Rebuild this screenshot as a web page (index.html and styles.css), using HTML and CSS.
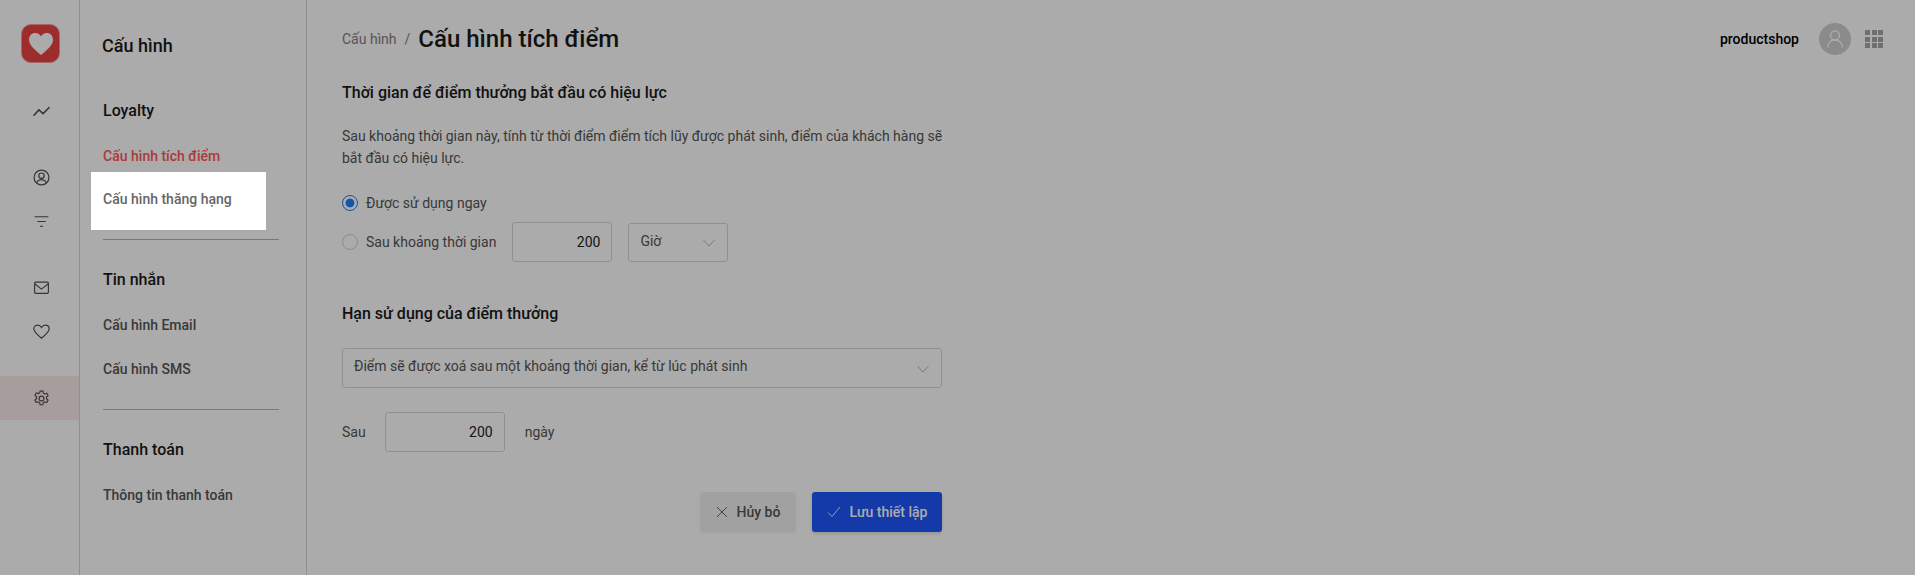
FILE: index.html
```html
<!DOCTYPE html>
<html lang="vi">
<head>
<meta charset="utf-8">
<title>Cấu hình tích điểm</title>
<link rel="stylesheet" href="styles.css">
</head>
<body>
<div class="app">
  <nav class="rail">
    <div class="logo">
      <svg width="26" height="24" viewBox="0 0 26 24"><path d="M13 23C5 16.500 1 12.500 1 7.500 1 3.700 3.800 1 7.200 1 9.600 1 11.800 2.200 13 4.300 14.200 2.200 16.400 1 18.800 1 22.200 1 25 3.700 25 7.500 25 12.500 21 16.500 13 23Z" fill="#fff"/></svg>
    </div>
    <div class="rail-group first">
      <div class="rail-icon"><svg class="ic bold" viewBox="0 0 16 16"><path d="M.5 12 5.500 6.500l4 3.500 6-6"/></svg></div>
    </div>
    <div class="rail-group">
      <div class="rail-icon"><svg class="ic" viewBox="0 0 16 16"><circle cx="8" cy="8" r="7"/><circle cx="8" cy="6.300" r="2.500"/><path d="M3.500 13c.8-2 2.500-3 4.500-3s3.700 1 4.500 3"/></svg></div>
      <div class="rail-icon"><svg class="ic" viewBox="0 0 16 16"><path d="M1.500 3.500h13M4 8h8M6.500 12.500h3"/></svg></div>
    </div>
    <div class="rail-group">
      <div class="rail-icon"><svg class="ic" viewBox="0 0 16 16"><rect x="1.500" y="3" width="13" height="10.500" rx="1"/><path d="M1.500 4.500 8 9.500l6.500-5"/></svg></div>
      <div class="rail-icon"><svg class="ic" viewBox="0 0 16 16"><path d="M8 14.300C3.200 10.500.8 8.300.8 5.500.8 3.400 2.400 2 4.300 2 5.800 2 7.200 2.800 8 4.200 8.800 2.800 10.200 2 11.700 2c1.900 0 3.500 1.400 3.500 3.500 0 2.800-2.400 5-7.200 8.800Z"/></svg></div>
    </div>
    <div class="rail-group last">
      <div class="rail-icon active"><svg class="ic" viewBox="0 0 16 16"><path d="M6.700 1h2.600l.4 2 1.300.7 1.900-.7 1.300 2.300-1.500 1.300v1.600l1.500 1.300-1.300 2.300-1.900-.7-1.300.8-.4 2H6.700l-.4-2-1.300-.8-1.900.7-1.300-2.300 1.500-1.300V6.300L1.800 5l1.300-2.300 1.900.7 1.300-.7Z"/><circle cx="8" cy="8" r="2.300"/></svg></div>
    </div>
  </nav>

  <aside class="side">
    <h1 class="side-title">Cấu hình</h1>
    <section class="side-sec">
      <h2 class="side-head">Loyalty</h2>
      <a class="side-link current">Cấu hình tích điểm</a>
      <a class="side-link spot">Cấu hình thăng hạng</a>
    </section>
    <section class="side-sec ruled">
      <h2 class="side-head">Tin nhắn</h2>
      <a class="side-link">Cấu hình Email</a>
      <a class="side-link">Cấu hình SMS</a>
    </section>
    <section class="side-sec ruled">
      <h2 class="side-head">Thanh toán</h2>
      <a class="side-link">Thông tin thanh toán</a>
    </section>
  </aside>

  <main class="main">
    <header class="top">
      <div class="crumbs">
        <span class="crumb">Cấu hình</span>
        <span class="slash">/</span>
        <span class="page-title">Cấu hình tích điểm</span>
      </div>
      <div class="user">
        <span class="shop">productshop</span>
        <span class="avatar"><svg width="20" height="20" viewBox="0 0 20 20" fill="none" stroke="#fff" stroke-width="1.300"><circle cx="10" cy="6.500" r="4.500"/><path d="M2.500 18.500c.5-4.500 3.500-7.500 7.500-7.500s7 3 7.500 7.500"/></svg></span>
        <span class="apps"><i></i><i></i><i></i><i></i><i></i><i></i><i></i><i></i><i></i></span>
      </div>
    </header>

    <div class="form">
      <h3 class="form-head">Thời gian để điểm thưởng bắt đầu có hiệu lực</h3>
      <p class="desc">Sau khoảng thời gian này, tính từ thời điểm điểm tích lũy được phát sinh, điểm của khách hàng sẽ bắt đầu có hiệu lực.</p>
      <div class="radio-row one">
        <span class="radio on"></span><span class="label">Được sử dụng ngay</span>
      </div>
      <div class="radio-row two">
        <span class="radio"></span><span class="label">Sau khoảng thời gian</span>
        <span class="input w100 gap-a">200</span>
        <span class="select w100 gap-b short"><span>Giờ</span><svg class="chev" viewBox="0 0 12 8"><path d="M.5 1 6 7l5.500-6"/></svg></span>
      </div>

      <h3 class="form-head second">Hạn sử dụng của điểm thưởng</h3>
      <div class="select wide"><span>Điểm sẽ được xoá sau một khoảng thời gian, kể từ lúc phát sinh</span><svg class="chev" viewBox="0 0 12 8"><path d="M.5 1 6 7l5.500-6"/></svg></div>
      <div class="after-row">
        <span class="label">Sau</span>
        <span class="input w120">200</span>
        <span class="label">ngày</span>
      </div>
      <div class="actions">
        <button class="btn cancel"><svg class="btn-ic" viewBox="0 0 12 12"><path d="M1 1l10 10M11 1 1 11"/></svg>Hủy bỏ</button>
        <button class="btn save"><svg class="btn-ic" viewBox="0 0 14 12"><path d="M1 6.500 5 10.500 13 1"/></svg>Lưu thiết lập</button>
      </div>
    </div>
  </main>
</div>
<div class="overlay"></div>
</body>
</html>
```
FILE: styles.css
```css
* { box-sizing: border-box; }
html, body { margin: 0; height: 100%; overflow: hidden; background: #fff; }
body { font-family: Roboto, "Noto Sans", sans-serif; font-size: 14px; color: #333; }

.app { display: flex; height: 575px; }
.overlay { position: fixed; inset: 0; background: rgba(0, 0, 0, .33); z-index: 5; }

/* icon rail */
.rail { width: 80px; flex: none; border-right: 1px solid #d6d6d6; display: flex; flex-direction: column; align-items: stretch; padding-top: 24px; }
.logo { width: 39px; height: 39px; margin-left: 21px; border-radius: 10px; background: #ea4444; border: 1px solid #f79a9a; display: flex; align-items: center; justify-content: center; }
.rail-group { margin-top: 22px; display: flex; flex-direction: column; }
.rail-group.first { margin-top: 26px; }
.rail-group.last { margin-top: 23px; }
.rail-icon { height: 44px; display: flex; align-items: center; justify-content: center; padding-left: 3px; }
.rail-icon.active { background: #fbeaea; }
.ic { width: 17px; height: 17px; fill: none; stroke: #505050; stroke-width: 1.100; }
.ic.bold { stroke-width: 1.500; }

/* second sidebar */
.side { width: 227px; flex: none; border-right: 1px solid #d6d6d6; padding-left: 21px; padding-right: 27px; }
.side-title { margin: 35px 0 0 1px; font-size: 18px; line-height: 22px; font-weight: 500; color: #1a1a1a; }
.side-sec { display: flex; flex-direction: column; }
.side-sec:first-of-type { margin-top: 44px; }
.side-sec.ruled { margin: 17px 0 0 2px; border-top: 1px solid #b4b4c0; padding-top: 30px; }
.side-sec.ruled:last-of-type { margin-top: 18px; }
.side-sec.ruled .side-head, .side-sec.ruled .side-link { margin-left: 0; }
.side-head { margin: 0 0 0 2px; font-size: 16px; line-height: 20px; font-weight: 500; color: #1a1a1a; }
.side-link { display: block; margin-left: 2px; height: 44px; line-height: 44px; font-size: 14px; font-weight: 500; color: #555; }
.side-head + .side-link { margin-top: 13px; }
.side-link.current { color: #ff5858; }
.side-link.spot { position: relative; z-index: 6; background: #fff; color: #666; width: 175px; height: 58px; line-height: 54px; margin: -6px 0 -8px -10px; padding-left: 12px; }

/* main */
.main { flex: 1; min-width: 0; padding: 0 32px 0 35px; }
.top { display: flex; justify-content: space-between; align-items: center; height: 78px; }
.crumbs { display: flex; align-items: center; }
.crumb { color: #808080; font-size: 14px; }
.slash { color: #808080; margin: 0 8px; font-size: 14px; }
.page-title { font-size: 24px; font-weight: 500; color: #1a1a1a; }
.user { display: flex; align-items: center; }
.shop { font-weight: 500; font-size: 14px; color: #000; margin-right: 20px; }
.avatar { width: 32px; height: 32px; border-radius: 50%; background: #d0d0d0; display: flex; align-items: center; justify-content: center; margin-right: 14px; }
.apps { width: 18px; height: 18px; display: grid; grid-template-columns: repeat(3, 5px); grid-auto-rows: 5px; gap: 1.500px; }
.apps i { background: #a8a8a8; }

.form { width: 600px; }
.form-head { margin: 5px 0 0; font-size: 16px; line-height: 20px; font-weight: 500; color: #1a1a1a; }
.form-head.second { margin-top: 42px; }
.desc { margin: 22px 0 0; width: 606px; line-height: 22px; font-size: 14px; color: #555; }
.label { color: #555; font-size: 14px; }
.radio-row { display: flex; align-items: center; }
.radio-row.one { margin-top: 23px; height: 22px; }
.radio-row.two { margin-top: 8px; }
.radio { width: 16px; height: 16px; border-radius: 50%; border: 1px solid #d0d0d0; margin-right: 8px; flex: none; background: #fff; }
.radio.on { border-color: #1e7ffa; background: radial-gradient(circle, #1e7ffa 0 4px, #fff 4.800px); }
.input { display: block; height: 40px; line-height: 38px; border: 1px solid #d4d8dc; border-radius: 3px; text-align: right; padding-right: 11px; color: #222; font-size: 14px; }
.select { display: flex; align-items: center; justify-content: space-between; height: 40px; border: 1px solid #d4d8dc; border-radius: 3px; padding: 0 12px 4px 11px; color: #555; font-size: 14px; }
.select .chev { margin-top: 5px; }
.select.short { height: 39px; align-self: flex-end; }
.w100 { width: 100px; }
.w120 { width: 120px; }
.gap-a { margin-left: 16px; }
.gap-b { margin-left: 16px; }
.chev { width: 12px; height: 8px; fill: none; stroke: #b8b8b8; stroke-width: 1; flex: none; }
.wide { width: 600px; margin-top: 24px; }
.after-row { display: flex; align-items: center; margin-top: 24px; }
.after-row .input { margin: 0 20px 0 19px; }
.actions { display: flex; justify-content: flex-end; gap: 16px; margin-top: 40px; }
.btn { height: 40px; border: 0; border-radius: 3px; font-family: inherit; font-size: 14px; font-weight: 500; display: flex; align-items: center; justify-content: center; }
.btn-ic { width: 12px; height: 12px; fill: none; stroke-width: .9; margin-right: 9px; }
.cancel { width: 96px; background: #f1f1f1; color: #555; box-shadow: 0 1px 2px rgba(0, 0, 0, .06); }
.cancel .btn-ic { stroke: #555; }
.save { width: 130px; background: #1f55fb; color: #fff; box-shadow: 0 2px 3px rgba(0, 0, 0, .12); }
.save .btn-ic { stroke: #fff; width: 14px; }
```
